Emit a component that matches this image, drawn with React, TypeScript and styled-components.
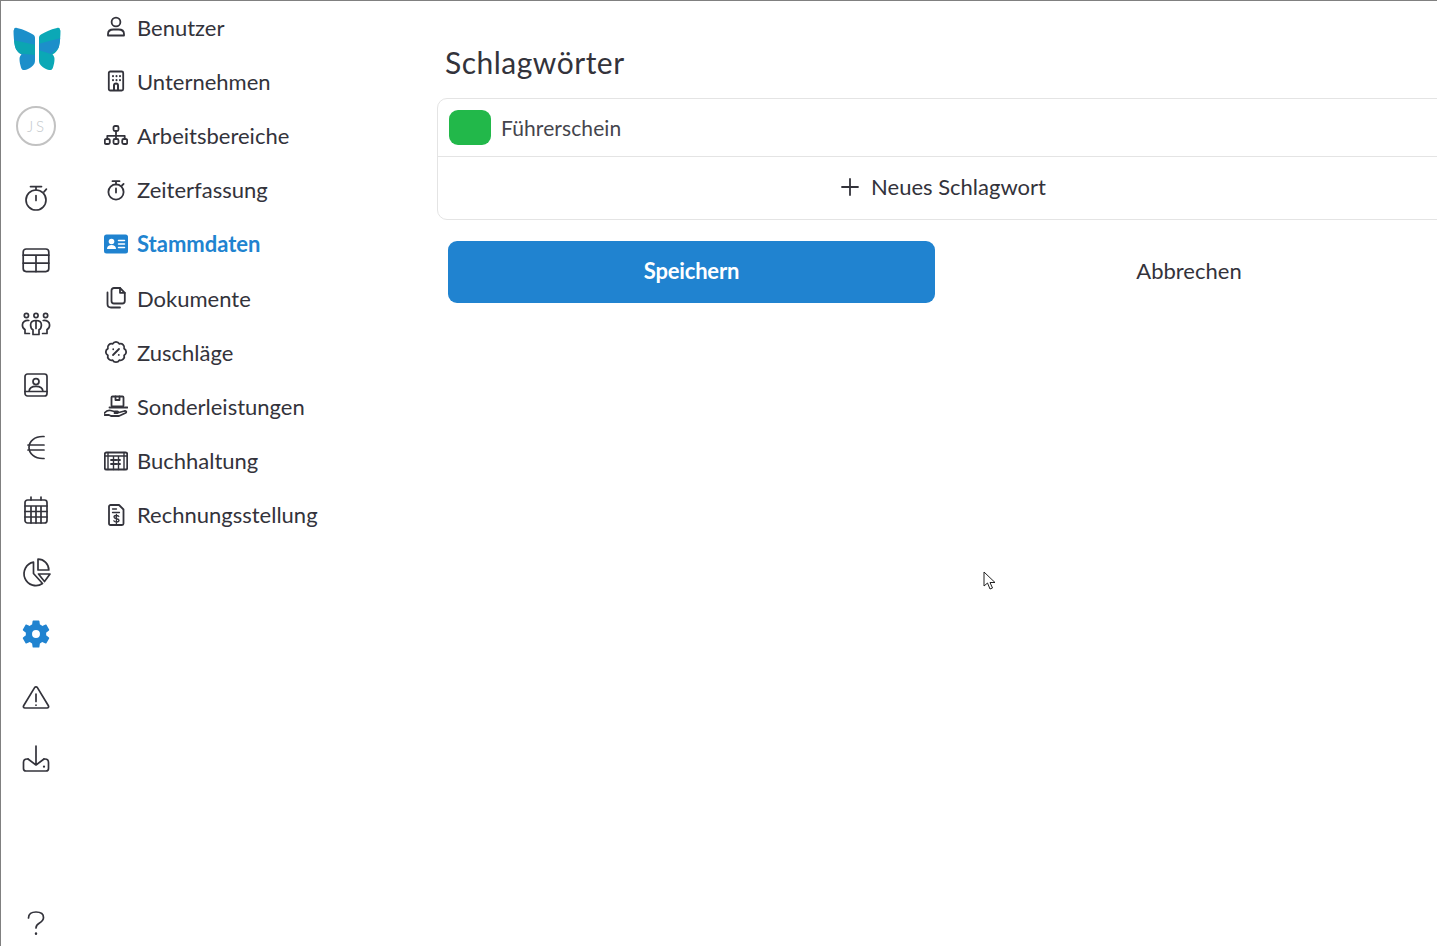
import React from 'react';
import styled, { createGlobalStyle } from 'styled-components';

const GlobalStyle = createGlobalStyle`
  html, body {
    margin: 0;
    padding: 0;
    background: #fff;
    overflow: hidden;
  }
  body {
    font-family: "Lato", "Open Sans", sans-serif;
    color: #33333b;
  }
`;

const Frame = styled.div`
  position: relative;
  box-sizing: border-box;
  width: 1437px;
  height: 946px;
  display: flex;
  overflow: hidden;
  border-top: 1px solid #808080;
  border-left: 1px solid #808080;
`;

const Rail = styled.aside`
  flex: 0 0 70px;
  display: flex;
  flex-direction: column;
  align-items: center;
`;

const Logo = styled.svg`
  width: 48px;
  height: 44px;
  margin: 26px 0 35px 2px;
`;

const Avatar = styled.div`
  box-sizing: border-box;
  width: 40px;
  height: 40px;
  border: 2px solid #c2c2c2;
  border-radius: 50%;
  display: flex;
  align-items: center;
  justify-content: center;
  font-size: 15px;
  font-weight: 300;
  letter-spacing: 3px;
  padding-left: 2px;
  color: #c4c9cc;
  margin-bottom: 21px;
`;

const RailList = styled.div`
  display: flex;
  flex-direction: column;
  flex: 1;
`;

const RailItem = styled.div`
  height: 62.3px;
  display: flex;
  align-items: center;
  justify-content: center;
`;

const RailBottom = styled.div`
  height: 32px;
  margin-bottom: 7px;
`;

const Glyph = styled.svg<{ $size: number }>`
  width: ${p => p.$size}px;
  height: ${p => p.$size}px;
  display: block;
  flex: none;
  fill: none;
  stroke: #33333b;
  stroke-width: ${p => (p.$size < 32 ? 1.8 : 1.7)};
  stroke-linecap: round;
  stroke-linejoin: round;
`;

const GearGlyph = styled(Glyph)`
  fill: #2083d0;
  stroke: none;
`;

const CardGlyph = styled(Glyph)`
  stroke: none;
`;

const Nav = styled.nav`
  flex: 0 0 366px;
  display: flex;
  flex-direction: column;
  margin-top: -1px;
  padding-left: 33px;
  box-sizing: border-box;
`;

const NavItem = styled.div<{ $active?: boolean }>`
  height: 54.2px;
  display: flex;
  align-items: center;
  gap: 9px;
  font-size: 22px;
  font-weight: ${p => (p.$active ? 700 : 400)};
  color: ${p => (p.$active ? '#2083d0' : '#33333b')};
`;

const Main = styled.main`
  flex: 1;
  min-width: 0;
  display: flex;
  flex-direction: column;
`;

const Heading = styled.h1`
  margin: 43px 0 0 8px;
  height: 54px;
  font-size: 30px;
  line-height: 36px;
  font-weight: 400;
  letter-spacing: 0.5px;
  color: #33333b;
`;

const Card = styled.section`
  box-sizing: border-box;
  width: 1040px;
  height: 122px;
  border: 1px solid #e4e4e4;
  border-radius: 10px;
`;

const TagRow = styled.div`
  box-sizing: border-box;
  height: 58px;
  display: flex;
  align-items: center;
  gap: 10px;
  padding-left: 11px;
  border-bottom: 1px solid #e4e4e4;
  font-size: 21px;
  letter-spacing: 0.1px;
  color: #45454d;
`;

const Swatch = styled.span`
  width: 42px;
  height: 35px;
  border-radius: 9px;
  background: #22b84a;
`;

const TagName = styled.span`
  padding-bottom: 1px;
`;

const AddRow = styled.div`
  box-sizing: border-box;
  height: 62px;
  width: 1008px;
  padding-bottom: 3px;
  display: flex;
  align-items: center;
  justify-content: center;
  gap: 9px;
  font-size: 22px;
  color: #33333b;
`;

const Actions = styled.div`
  display: flex;
  margin-top: 21px;
  padding-left: 11px;
`;

const SaveButton = styled.button`
  flex: none;
  width: 487px;
  height: 62px;
  border: none;
  border-radius: 9px;
  padding: 0 0 3px;
  background: #2083d0;
  color: #fff;
  font-family: inherit;
  font-size: 22px;
  font-weight: 700;
  letter-spacing: -0.2px;
`;

const CancelButton = styled.button`
  flex: none;
  width: 508px;
  height: 62px;
  border: none;
  padding: 0 0 3px;
  background: transparent;
  color: #33333b;
  font-family: inherit;
  font-size: 22px;
`;

const Pointer = styled.svg`
  position: absolute;
  left: 982px;
  top: 570px;
  width: 14px;
  height: 20px;
`;

// scalloped badge outline, eight bumps round the centre
const badgePath = (() => {
  const cx = 12;
  const cy = 12;
  const r = 8.8;
  const n = 8;
  let d = '';
  for (let i = 0; i <= n; i++) {
    const a = (i / n) * Math.PI * 2 + Math.PI / 8;
    const x = (cx + r * Math.cos(a)).toFixed(2);
    const y = (cy + r * Math.sin(a)).toFixed(2);
    d += i === 0 ? `M${x} ${y}` : `A3.8 3.8 0 0 1 ${x} ${y}`;
  }
  return d + 'z';
})();

const Stop = ({ small }: { small?: boolean }) =>
  small ? (
    <Glyph $size={24} viewBox="0 0 24 24">
      <circle cx="12" cy="14" r="7.600" />
      <path d="M8.500 3.200h7M12 3.200v3.200M18 7.500l1.600-1.600M12 10.500v4" />
    </Glyph>
  ) : (
    <Glyph $size={32} viewBox="0 0 32 32">
      <circle cx="16" cy="18" r="10" />
      <path d="M10.500 4.600h11M16 4.600v3.400M24 9.800l2.400-2.600M16 13.500v5" />
    </Glyph>
  );

const railIcons: React.ReactNode[] = [
  <Stop key="timer" />,
  <Glyph key="table" $size={32} viewBox="0 0 32 32">
    <rect x="3.200" y="5" width="25.600" height="22.600" rx="3" />
    <path d="M3.200 11.200h25.600M3.200 19.200h25.600M16 11.200v16.400" />
  </Glyph>,
  <Glyph key="team" $size={32} viewBox="0 0 32 32">
    <circle cx="6.400" cy="8.500" r="2.100" />
    <circle cx="16" cy="8.500" r="2.100" />
    <circle cx="25.600" cy="8.500" r="2.100" />
    <path d="M16 13.500c-3.500 0-5.400 1.800-5.400 4.400 0 2.400.9 4 2.400 4.800v4.800h6v-4.800c1.500-.8 2.400-2.400 2.400-4.800 0-2.600-1.900-4.400-5.400-4.400zM16 13.500v8" />
    <path d="M8.800 13.500c-3.900-.4-6.400 1.500-6.400 4.400 0 2.500 1 3.900 2.600 4.600v4h4.400" />
    <path d="M23.200 13.500c3.900-.4 6.400 1.500 6.400 4.400 0 2.500-1 3.900-2.600 4.600v4h-4.400" />
  </Glyph>,
  <Glyph key="contact" $size={32} viewBox="0 0 32 32">
    <rect x="5" y="5" width="22" height="22" rx="2.500" />
    <circle cx="16" cy="12.600" r="3" />
    <path d="M5 22.500h22M9 22.500c.3-3.400 3-5.200 7-5.200s6.700 1.800 7 5.200" />
  </Glyph>,
  <Glyph key="euro" $size={32} viewBox="0 0 32 32">
    <path d="M24 5.500h-1.500C15 5.500 9 10 9 16.500s6 11 13.500 11H24M8 14h16M8 19h16" />
  </Glyph>,
  <Glyph key="calendar" $size={32} viewBox="0 0 32 32">
    <rect x="5" y="6" width="22" height="23" rx="2.500" />
    <path d="M11 3v3M21 3v3M5 12h22M5 17.500h22M5 23h22M11 12v17M16 12v17M21 12v17" />
  </Glyph>,
  <Glyph key="pie" $size={32} viewBox="0 0 32 32">
    <path d="M13.500 6.200A11.800 11.800 0 1 0 22.500 27.500L13.500 17.500z" />
    <path d="M18 3.200A10.800 10.800 0 0 1 28.800 14H18z" />
    <path d="M18.500 18h11.500l-5.500 7.500z" />
  </Glyph>,
  <GearGlyph key="gear" $size={34} viewBox="0 0 24 24">
    <path
      fillRule="evenodd"
      d="M19.140 12.940c.04-.3.06-.61.06-.94 0-.32-.02-.64-.07-.94l2.030-1.580c.18-.14.23-.41.12-.61l-1.920-3.320c-.12-.22-.37-.29-.59-.22l-2.390.96c-.5-.38-1.030-.7-1.620-.94l-.36-2.540c-.04-.24-.24-.41-.48-.41h-3.840c-.24 0-.43.17-.47.41l-.36 2.540c-.59.24-1.130.57-1.620.94l-2.390-.96c-.22-.08-.47 0-.59.22L2.740 8.870c-.12.21-.08.47.12.61l2.030 1.580c-.05.3-.09.63-.09.94s.02.64.07.94l-2.030 1.580c-.18.14-.23.41-.12.61l1.920 3.320c.12.22.37.29.59.22l2.390-.96c.5.38 1.030.7 1.620.94l.36 2.540c.05.24.24.41.48.41h3.840c.24 0 .44-.17.47-.41l.36-2.540c.59-.24 1.130-.56 1.620-.94l2.390.96c.22.08.47 0 .59-.22l1.920-3.320c.12-.22.07-.47-.12-.61l-2.010-1.580zM12 14.800a2.800 2.800 0 1 1 0-5.600 2.800 2.800 0 0 1 0 5.600z"
    />
  </GearGlyph>,
  <Glyph key="warning" $size={32} viewBox="0 0 32 32">
    <path d="M14.600 6.600c.6-1 2.200-1 2.800 0l11 18.200c.6 1 0 2.200-1.300 2.200H4.900c-1.300 0-1.900-1.200-1.300-2.200z" />
    <path d="M16 13v7.500M16 24v.2" />
  </Glyph>,
  <Glyph key="download" $size={32} viewBox="0 0 32 32">
    <path d="M16 3v19M8 16l8 6 8-6" />
    <path d="M8 16H7c-2 0-3.500 1.500-3.500 3.500v6c0 1.500 1 2.500 2.500 2.500h20c1.500 0 2.500-1 2.500-2.500v-6c0-2-1.500-3.500-3.500-3.500h-1" />
    <path d="M24 23.500v.2" strokeWidth="2.200" />
  </Glyph>,
];

const navItems: { label: string; active?: boolean; icon: React.ReactNode }[] = [
  {
    label: 'Benutzer',
    icon: (
      <Glyph $size={24} viewBox="0 0 24 24">
        <circle cx="12" cy="7" r="4.400" />
        <path d="M4 20.500v-1.500c0-3 2.500-4.500 5.500-4.500h5c3 0 5.500 1.500 5.500 4.500v1.500z" />
      </Glyph>
    ),
  },
  {
    label: 'Unternehmen',
    icon: (
      <Glyph $size={24} viewBox="0 0 24 24">
        <rect x="4.800" y="2.500" width="14.400" height="19" rx="1.500" />
        <path d="M9 7v.3M12.500 7v.3M16 7v.3M9 11v.3M12.500 11v.3M16 11v.3M10 21v-4.500a2 2 0 0 1 4 0V21" strokeWidth="2" />
      </Glyph>
    ),
  },
  {
    label: 'Arbeitsbereiche',
    icon: (
      <Glyph $size={24} viewBox="0 0 24 24">
        <rect x="9.500" y="3" width="5" height="5" rx="1.500" />
        <rect x=".8" y="16" width="5" height="5" rx="1.500" />
        <rect x="9.500" y="16" width="5" height="5" rx="1.500" />
        <rect x="18.200" y="16" width="5" height="5" rx="1.500" />
        <path d="M12 8v8M3.300 16v-3.200h17.400V16" />
      </Glyph>
    ),
  },
  { label: 'Zeiterfassung', icon: <Stop small /> },
  {
    label: 'Stammdaten',
    active: true,
    icon: (
      <CardGlyph $size={24} viewBox="0 0 24 24">
        <rect y="2.500" width="24" height="19" rx="2.500" fill="#2083d0" />
        <circle cx="7.500" cy="9.500" r="2.800" fill="#fff" />
        <path d="M3 17c0-3 2-4 4.500-4s4.500 1 4.500 4z" fill="#fff" />
        <path d="M14.500 8.500h6M14.500 12h6M14.500 15.500h6" stroke="#fff" strokeWidth="1.500" />
      </CardGlyph>
    ),
  },
  {
    label: 'Dokumente',
    icon: (
      <Glyph $size={24} viewBox="0 0 24 24">
        <path d="M7.500 4.500c0-1.500 1-2.500 2.500-2.500h6l4.800 4.800V15c0 1.500-1 2.500-2.500 2.500H10c-1.500 0-2.500-1-2.500-2.500z" />
        <path d="M16 2v4.800h4.800" />
        <path d="M3.500 6.500V18c0 2 1.500 3.500 3.500 3.500h9" />
      </Glyph>
    ),
  },
  {
    label: 'Zuschläge',
    icon: (
      <Glyph $size={24} viewBox="0 0 24 24">
        <path d={badgePath} />
        <path d="M15 9l-6 6M9.200 9.200v.1M14.800 14.800v.1" />
      </Glyph>
    ),
  },
  {
    label: 'Sonderleistungen',
    icon: (
      <Glyph $size={24} viewBox="0 0 24 24">
        <rect x="7.500" y="2.500" width="12" height="10" rx="1" />
        <path d="M11.500 2.500v3.500h4V2.500" />
        <path d="M5.500 13.500h18" />
        <path d="M.5 19c2-2.500 4-3 6-2.500l4 1h3c1 0 1 1.500 0 1.500h-3M13 19l7.500-2c1.500-.3 2.500 1 1 2l-6.500 3H7l-2-1H.5" />
      </Glyph>
    ),
  },
  {
    label: 'Buchhaltung',
    icon: (
      <Glyph $size={24} viewBox="0 0 24 24">
        <rect x=".8" y="3.500" width="22.400" height="17" rx="1.500" />
        <path d="M.8 7h22.400M4 3.500v17M20 3.500v17M9.500 7v13.500M14.500 7v13.500" strokeWidth="1.400" />
        <path d="M7 11h10M7 15h10" strokeDasharray="2 1.500" strokeWidth="1.800" />
      </Glyph>
    ),
  },
  {
    label: 'Rechnungsstellung',
    icon: (
      <Glyph $size={24} viewBox="0 0 24 24">
        <path d="M5 3.500C5 2.500 6 2 6.500 2H15l4.500 4.500v14c0 1-.8 1.500-1.500 1.500H6.500C5.500 22 5 21.500 5 20.500z" />
        <path d="M8.500 6h4M8.500 9.500h7M14.800 13.500c-.5-.8-1.500-1-2.500-1-1.200 0-2.300.5-2.300 1.600 0 2.300 5 1 5 3.200 0 1.100-1.200 1.700-2.500 1.700-1.100 0-2-.4-2.600-1.200M12.400 11.500v9" strokeWidth="1.300" />
      </Glyph>
    ),
  },
];

const App = () => {
  return (
    <>
      <GlobalStyle />
      <Frame>
        <Rail>
          <Logo viewBox="13 27 48 44">
            <defs>
              <clipPath id="wingLeft">
                <path d="M14 30c0-2 1-2.500 3-2 7 1.500 12 4 16 6.500 1.500 1 2 2 2 3.500v22c0 2.500-.5 4-2 5.500-2.500 2.500-5.500 4-8 4.500-2 .4-3.500-.5-4-2.500-1-3.500-1.500-6-1.500-8.500 0-1.800.5-3 2-4.500-3.500-2-5.500-4.500-6.500-8-1-4.500-1.500-11-1.500-16z" />
              </clipPath>
              <clipPath id="wingRight">
                <path d="M60 30c0-2-1-2.500-3-2-7 1.500-12 4-16 6.500-1.500 1-2 2-2 3.500v22c0 2.500.5 4 2 5.500 2.500 2.500 5.500 4 8 4.500 2 .4 3.500-.5 4-2.500 1-3.500 1.500-6 1.500-8.500 0-1.800-.5-3-2-4.500 3.500-2 5.500-4.500 6.500-8 1-4.500 1.500-11 1.500-16z" />
              </clipPath>
            </defs>
            <g clipPath="url(#wingLeft)">
              <rect x="13" y="27" width="23" height="44" fill="#1c8fca" />
              <path d="M13 40l23 5v10l-23-2z" fill="#0ca5b2" />
            </g>
            <g clipPath="url(#wingRight)">
              <rect x="38" y="27" width="23" height="44" fill="#0ba8b6" />
              <path d="M38 44l23-6v8l-10 8-13-4z" fill="#1c8fca" />
            </g>
          </Logo>
          <Avatar>JS</Avatar>
          <RailList>
            {railIcons.map((icon, i) => (
              <RailItem key={i}>{icon}</RailItem>
            ))}
          </RailList>
          <RailBottom>
            <Glyph $size={32} viewBox="0 0 32 32">
              <path d="M8.500 11c0-4 3-6 7.500-6s7.500 2 7.500 5.500c0 3-2 4.300-4 5.500-2 1.200-3.500 2.300-3.500 5" />
              <path d="M16 26.500v.2" strokeWidth="2.400" />
            </Glyph>
          </RailBottom>
        </Rail>
        <Nav>
          {navItems.map(item => (
            <NavItem key={item.label} $active={item.active}>
              {item.icon}
              <span>{item.label}</span>
            </NavItem>
          ))}
        </Nav>
        <Main>
          <Heading>Schlagwörter</Heading>
          <Card>
            <TagRow>
              <Swatch />
              <TagName>Führerschein</TagName>
            </TagRow>
            <AddRow>
              <Glyph $size={24} viewBox="0 0 24 24">
                <path d="M12 4v16M4 12h16" />
              </Glyph>
              Neues Schlagwort
            </AddRow>
          </Card>
          <Actions>
            <SaveButton>Speichern</SaveButton>
            <CancelButton>Abbrechen</CancelButton>
          </Actions>
        </Main>
        <Pointer viewBox="0 0 14 20">
          <path d="M1 1v14l3.500-3 2.500 6 2.500-1-2.500-5.500H12z" fill="#fff" stroke="#222" strokeWidth="1" />
        </Pointer>
      </Frame>
    </>
  );
};

export default App;
